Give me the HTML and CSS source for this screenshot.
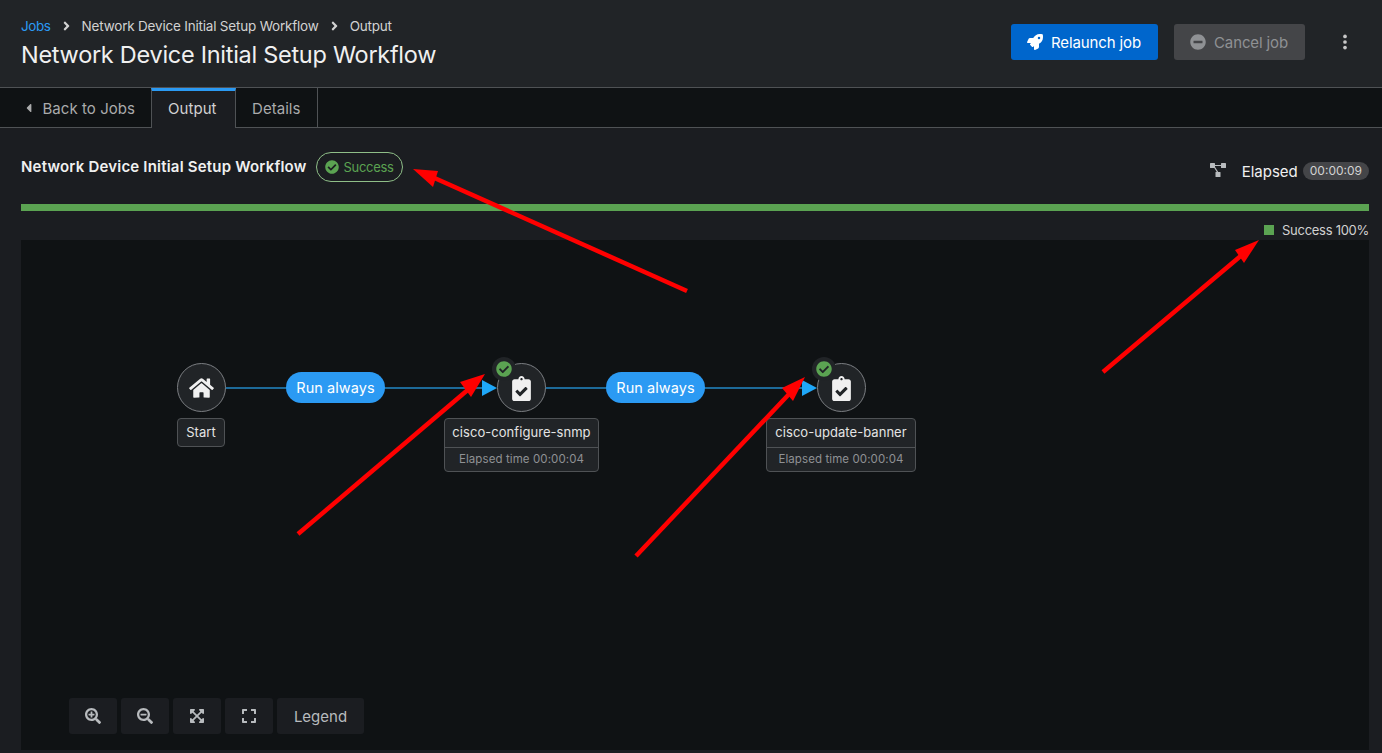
FILE: index.html
```html
<!DOCTYPE html>
<html lang="en">
<head>
<meta charset="utf-8">
<title>Network Device Initial Setup Workflow</title>
<link rel="stylesheet" href="styles.css">
</head>
<body>
<svg class="defs" width="0" height="0" aria-hidden="true">
  <defs>
    <symbol id="i-check" viewBox="0 0 512 512"><path d="M504 256c0 136.967-111.033 248-248 248S8 392.967 8 256 119.033 8 256 8s248 111.033 248 248zM227.314 387.314l184-184c6.248-6.248 6.248-16.379 0-22.627l-22.627-22.627c-6.248-6.249-16.379-6.249-22.628 0L216 308.118l-70.059-70.059c-6.248-6.248-16.379-6.248-22.628 0l-22.627 22.627c-6.248 6.248-6.248 16.379 0 22.627l104 104c6.249 6.249 16.379 6.249 22.628.001z"/></symbol>
    <symbol id="i-clip" viewBox="0 0 384 512"><path d="M336 64h-80c0-35.3-28.7-64-64-64s-64 28.7-64 64H48C21.5 64 0 85.5 0 112v352c0 26.5 21.5 48 48 48h288c26.5 0 48-21.5 48-48V112c0-26.5-21.5-48-48-48zM192 40c13.3 0 24 10.7 24 24s-10.7 24-24 24-24-10.7-24-24 10.7-24 24-24zm121.2 231.8l-143 141.8c-4.7 4.7-12.3 4.6-17-.1l-82.6-83.3c-4.7-4.7-4.6-12.3.1-17L99.1 285c4.7-4.7 12.3-4.6 17 .1l46 46.4 106-105.2c4.7-4.7 12.3-4.6 17 .1l28.2 28.4c4.7 4.8 4.6 12.3-.1 17z"/></symbol>
    <symbol id="i-angle" viewBox="0 0 256 512"><path d="M224.3 273l-136 136c-9.4 9.4-24.6 9.4-33.9 0l-22.6-22.6c-9.4-9.4-9.4-24.6 0-33.9l96.4-96.4-96.4-96.4c-9.4-9.4-9.4-24.6 0-33.9L54.3 103c9.4-9.4 24.6-9.4 33.9 0l136 136c9.5 9.4 9.5 24.6.1 34z"/></symbol>
  </defs>
</svg>

<header class="top">
  <div class="top-left">
    <nav class="crumbs">
      <a class="crumb-link">Jobs</a>
      <svg class="crumb-sep"><use href="#i-angle"/></svg>
      <span>Network Device Initial Setup Workflow</span>
      <svg class="crumb-sep"><use href="#i-angle"/></svg>
      <span>Output</span>
    </nav>
    <h1 class="page-title">Network Device Initial Setup Workflow</h1>
  </div>
  <div class="top-actions">
    <button class="btn btn-primary">
      <svg class="btn-icon" viewBox="0 0 512 512"><path d="M505.12 19.09c-1.19-5.53-6.66-11-12.21-12.18C460.72 0 435.51 0 410.41 0 307.18 0 245.27 55.2 199.05 128H94.84c-16.35.02-35.56 11.88-42.89 26.48L2.52 253.3A28.4 28.4 0 0 0 0 264a24 24 0 0 0 24 24h103.81l-22.47 22.47c-11.37 11.36-13 32.26 0 45.25l50.9 50.9c11.16 11.19 32.16 13.16 45.28 0L224 384.16V488a24 24 0 0 0 24 24 28.56 28.56 0 0 0 10.71-2.52l98.73-49.39c14.63-7.3 26.51-26.5 26.51-42.86V312.8c72.6-46.31 128.03-108.41 128.03-211.1.1-25.2.1-50.4-6.86-82.61zM384.04 168a40 40 0 1 1 40.01-40 40.02 40.02 0 0 1-40.01 40z"/></svg>
      Relaunch job
    </button>
    <button class="btn btn-disabled">
      <svg class="btn-icon" viewBox="0 0 512 512"><path d="M256 8C119 8 8 119 8 256s111 248 248 248 248-111 248-248S393 8 256 8zM124 296c-6.6 0-12-5.4-12-12v-56c0-6.6 5.4-12 12-12h264c6.6 0 12 5.4 12 12v56c0 6.6-5.4 12-12 12H124z"/></svg>
      Cancel job
    </button>
    <button class="kebab" aria-label="Actions">
      <svg viewBox="0 0 6 20"><circle cx="3" cy="3" r="2.3"/><circle cx="3" cy="10" r="2.3"/><circle cx="3" cy="17" r="2.3"/></svg>
    </button>
  </div>
</header>

<nav class="tabs">
  <a class="tab tab-back">
    <svg class="caret" viewBox="0 0 192 512"><path d="M192 127.338v257.324c0 17.818-21.543 26.741-34.142 14.142L29.196 270.142c-7.81-7.81-7.81-20.474 0-28.284l128.662-128.662c12.599-12.6 34.142-3.676 34.142 14.142z"/></svg>
    Back to Jobs
  </a>
  <a class="tab tab-active">Output</a>
  <a class="tab">Details</a>
</nav>

<main class="content">
  <div class="job-head">
    <div class="job-title">
      <h2>Network Device Initial Setup Workflow</h2>
      <span class="status-pill"><svg class="status-icon"><use href="#i-check"/></svg>Success</span>
    </div>
    <div class="job-meta">
      <svg class="graph-icon" viewBox="0 0 16 14"><rect x="0" y="0" width="5" height="5" rx=".6"/><rect x="11" y="0" width="5" height="5" rx=".6"/><rect x="5.5" y="9" width="5" height="5" rx=".6"/><path d="M4 2h8v1H4zM3.4 3.5l1-.6 4 6.4-1 .6z"/></svg>
      <span class="elapsed">Elapsed</span>
      <span class="elapsed-badge">00:00:09</span>
    </div>
  </div>
  <div class="progress"></div>
  <div class="legend-row"><i class="legend-swatch"></i>Success 100%</div>

  <section class="canvas">
    <div class="edge edge-a"></div>
    <div class="edge edge-b"></div>
    <div class="edge-arrow arrow-a"></div>
    <div class="edge-arrow arrow-b"></div>
    <span class="edge-pill pill-a">Run always</span>
    <span class="edge-pill pill-b">Run always</span>

    <div class="node node-start">
      <svg class="home" viewBox="0 0 576 512"><path d="M280.37 148.26L96 300.11V464a16 16 0 0 0 16 16l112.06-.29a16 16 0 0 0 15.92-16V368a16 16 0 0 1 16-16h64a16 16 0 0 1 16 16v95.64a16 16 0 0 0 16 16.05L464 480a16 16 0 0 0 16-16V300L295.67 148.26a12.19 12.19 0 0 0-15.3 0zM571.6 251.47L488 182.56V44.05a12 12 0 0 0-12-12h-56a12 12 0 0 0-12 12v72.61L318.47 43a48 48 0 0 0-61 0L4.34 251.47a12 12 0 0 0-1.6 16.9l25.5 31A12 12 0 0 0 45.15 301l235.22-193.74a12.19 12.19 0 0 1 15.3 0L530.9 301a12 12 0 0 0 16.9-1.6l25.5-31a12 12 0 0 0-1.7-16.93z"/></svg>
    </div>
    <div class="node-label label-start"><div class="label-name">Start</div></div>

    <div class="node node-one"><svg class="clip"><use href="#i-clip"/></svg></div>
    <div class="node-badge badge-one"><svg><use href="#i-check"/></svg></div>
    <div class="node-label label-one">
      <div class="label-name">cisco-configure-snmp</div>
      <div class="label-time">Elapsed time 00:00:04</div>
    </div>

    <div class="node node-two"><svg class="clip"><use href="#i-clip"/></svg></div>
    <div class="node-badge badge-two"><svg><use href="#i-check"/></svg></div>
    <div class="node-label label-two">
      <div class="label-name">cisco-update-banner</div>
      <div class="label-time">Elapsed time 00:00:04</div>
    </div>

    <div class="toolbar">
      <button class="tool"><svg viewBox="0 0 512 512"><path d="M304 192v32c0 6.6-5.4 12-12 12h-56v56c0 6.6-5.4 12-12 12h-32c-6.6 0-12-5.4-12-12v-56h-56c-6.6 0-12-5.4-12-12v-32c0-6.6 5.4-12 12-12h56v-56c0-6.6 5.4-12 12-12h32c6.6 0 12 5.4 12 12v56h56c6.6 0 12 5.4 12 12zm201 284.7L476.7 505c-9.4 9.4-24.6 9.4-33.9 0L343 405.3c-4.5-4.5-7-10.6-7-17V372c-35.3 27.6-79.7 44-128 44C93.1 416 0 322.9 0 208S93.1 0 208 0s208 93.1 208 208c0 48.3-16.4 92.7-44 128h16.3c6.4 0 12.5 2.5 17 7l99.7 99.7c9.3 9.4 9.3 24.6 0 34zM344 208c0-75.2-60.8-136-136-136S72 132.8 72 208s60.8 136 136 136 136-60.8 136-136z"/></svg></button>
      <button class="tool"><svg viewBox="0 0 512 512"><path d="M304 192v32c0 6.6-5.4 12-12 12H124c-6.6 0-12-5.4-12-12v-32c0-6.6 5.4-12 12-12h168c6.6 0 12 5.4 12 12zm201 284.7L476.7 505c-9.4 9.4-24.6 9.4-33.9 0L343 405.3c-4.5-4.5-7-10.6-7-17V372c-35.3 27.6-79.7 44-128 44C93.1 416 0 322.9 0 208S93.1 0 208 0s208 93.1 208 208c0 48.3-16.4 92.7-44 128h16.3c6.4 0 12.5 2.5 17 7l99.7 99.7c9.3 9.4 9.3 24.6 0 34zM344 208c0-75.2-60.8-136-136-136S72 132.8 72 208s60.8 136 136 136 136-60.8 136-136z"/></svg></button>
      <button class="tool"><svg viewBox="0 0 448 512"><path d="M448 344v112a23.94 23.94 0 0 1-24 24H312c-21.39 0-32.09-25.9-17-41l36.2-36.2L224 295.6 116.77 402.9 153 439c15.09 15.1 4.39 41-17 41H24a23.94 23.94 0 0 1-24-24V344c0-21.4 25.89-32.1 41-17l36.19 36.2L184.46 256 77.18 148.7 41 185c-15.1 15.1-41 4.4-41-17V56a23.94 23.94 0 0 1 24-24h112c21.39 0 32.09 25.9 17 41l-36.2 36.2L224 216.4l107.23-107.3L295 73c-15.09-15.1-4.39-41 17-41h112a23.94 23.94 0 0 1 24 24v112c0 21.4-25.89 32.1-41 17l-36.19-36.2L263.54 256l107.28 107.3L407 327.1c15.1-15.2 41-4.5 41 16.9z"/></svg></button>
      <button class="tool"><svg viewBox="0 0 448 512"><path d="M0 180V56c0-13.3 10.7-24 24-24h124c6.6 0 12 5.4 12 12v40c0 6.6-5.4 12-12 12H64v84c0 6.6-5.4 12-12 12H12c-6.6 0-12-5.4-12-12zM288 44v40c0 6.6 5.4 12 12 12h84v84c0 6.6 5.4 12 12 12h40c6.6 0 12-5.4 12-12V56c0-13.3-10.7-24-24-24H300c-6.6 0-12 5.4-12 12zm148 276h-40c-6.6 0-12 5.4-12 12v84h-84c-6.6 0-12 5.4-12 12v40c0 6.6 5.4 12 12 12h124c13.3 0 24-10.7 24-24V332c0-6.6-5.4-12-12-12zM160 468v-40c0-6.6-5.4-12-12-12H64v-84c0-6.6-5.4-12-12-12H12c-6.6 0-12 5.4-12 12v124c0 13.3 10.7 24 24 24h124c6.6 0 12-5.4 12-12z"/></svg></button>
      <button class="tool tool-text">Legend</button>
    </div>
  </section>
</main>

<svg class="annotations" viewBox="0 0 1382 753" aria-hidden="true">
  <g class="anno">
    <line x1="687" y1="291" x2="430" y2="176"/><polygon points="413,169 438,171 433,187"/>
    <line x1="1103" y1="372" x2="1243" y2="254"/><polygon points="1259,240 1235,250 1244,263"/>
    <line x1="298" y1="534" x2="470" y2="388"/><polygon points="485,374 460,382 471,397"/>
    <line x1="636" y1="556" x2="791" y2="392"/><polygon points="805,377 782,388 793,401"/>
  </g>
</svg>
</body>
</html>
```
FILE: styles.css
```css
* { box-sizing: border-box; }
html, body { margin: 0; height: 100%; }
body {
  position: relative;
  display: flex;
  flex-direction: column;
  overflow: hidden;
  background: #1b1d21;
  color: #f0f0f0;
  font-family: Inter, "Liberation Sans", sans-serif;
  font-size: 15px;
}
.defs { position: absolute; }
svg { fill: currentColor; display: block; }

/* header */
.top {
  height: 88px;
  flex: none;
  display: flex;
  justify-content: space-between;
  padding: 16px 20px 0 21px;
  background: #212427;
  border-bottom: 1px solid #4f5255;
}
.crumbs {
  display: flex;
  align-items: center;
  height: 19px;
  font-size: 13.5px;
  letter-spacing: -.2px;
  color: #d2d2d2;
}
.crumb-link { color: #2b9af3; letter-spacing: -.4px; }
.crumb-sep { width: 7px; height: 14px; margin: 0 12px 0 12px; color: #d2d2d2; }
.page-title {
  margin: 3px 0 0;
  font-size: 23.5px;
  line-height: 34px;
  font-weight: 400;
  letter-spacing: -.28px;
  color: #f0f0f0;
}
.top-actions { display: flex; align-items: flex-start; padding-top: 8px; }
.btn {
  height: 36px;
  display: flex;
  align-items: center;
  gap: 8px;
  border: 0;
  border-radius: 3px;
  padding: 0 16px;
  font: inherit;
  white-space: nowrap;
  letter-spacing: -.12px;
}
.btn-icon { width: 16px; height: 16px; }
.btn-primary { width: 147px; background: #0066cc; color: #fff; margin-right: 16px; }
.btn-disabled { width: 131px; background: #444548; color: #8f9194; }
.kebab { width: 34px; margin-left: 23px; height: 36px; border: 0; background: none; padding: 0; color: #c7c7c7; display: flex; align-items: center; justify-content: center; }
.kebab svg { width: 6px; height: 16px; }

/* tabs */
.tabs {
  height: 40px;
  flex: none;
  display: flex;
  background: #0f1214;
  border-bottom: 1px solid #4f5255;
}
.tab {
  display: flex;
  align-items: center;
  gap: 11px;
  padding: 0 16px;
  height: 40px;
  color: #aaabac;
  letter-spacing: .05px;
  border-right: 1px solid #4f5255;
}
.tab-back { width: 151px; padding-left: 26px; border-right: 0; white-space: nowrap; }
.caret { width: 6px; height: 14px; }
.tab-active {
  width: 85px;
  background: #1b1d21;
  color: #d2d2d2;
  border-left: 1px solid #4f5255;
  border-top: 3px solid #2b9af3;
  padding-bottom: 2px;
}
.tab:last-child { width: 82px; }

/* content */
.content { flex: 1; padding: 24px 13px 0 21px; min-height: 0; }
.job-head { display: flex; justify-content: space-between; height: 52px; }
.job-title { display: flex; align-items: flex-start; gap: 10px; }
.job-title h2 { margin: 4px 0 0; font-size: 15px; line-height: 22px; font-weight: 600; letter-spacing: .2px; color: #f0f0f0; }
.status-pill {
  height: 30px;
  display: flex;
  align-items: center;
  gap: 4px;
  padding: 0 8px;
  border: 1px solid #8fbf88;
  border-radius: 15px;
  font-size: 13px;
  letter-spacing: -.3px;
  color: #5ba352;
}
.status-icon { width: 14px; height: 14px; }
.job-meta { display: flex; align-items: center; height: 38px; color: #f0f0f0; }
.graph-icon { width: 16px; height: 14px; color: #b8bbbe; margin: 0 16px 3px 0; }
.elapsed { letter-spacing: 0; font-size: 15px; margin-right: 5px; }
.elapsed-badge {
  height: 18px;
  line-height: 18px;
  padding: 0 7px;
  border-radius: 9px;
  background: #444548;
  font-size: 12px;
  color: #d2d2d2;
}
.progress { height: 7px; background: #5ba352; }
.legend-row {
  height: 29px;
  display: flex;
  align-items: center;
  justify-content: flex-end;
  gap: 8px;
  padding-top: 9px;
  font-size: 13px;
  letter-spacing: -.28px;
  color: #d2d2d2;
}
.legend-swatch { width: 10px; height: 10px; background: #5ba352; }

/* canvas */
.canvas { position: relative; height: 510px; background: #0f1214; }
.edge { position: absolute; top: 147px; height: 2px; background: #1d6a99; }
.edge-a { left: 204px; width: 262px; }
.edge-b { left: 524px; width: 262px; }
.edge-arrow {
  position: absolute;
  top: 140px;
  width: 0;
  height: 0;
  border-left: 15px solid #1fa7f8;
  border-top: 8px solid transparent;
  border-bottom: 8px solid transparent;
}
.arrow-a { left: 461px; }
.arrow-b { left: 781px; }
.edge-pill {
  position: absolute;
  top: 132px;
  width: 99px;
  height: 31px;
  border-radius: 16px;
  background: #2b9af3;
  color: #fff;
  font-size: 14.5px;
  line-height: 31px;
  text-align: center;
  letter-spacing: .05px;
}
.pill-a { left: 265px; }
.pill-b { left: 585px; }
.node {
  position: absolute;
  top: 123px;
  width: 49px;
  height: 49px;
  display: flex;
  align-items: center;
  justify-content: center;
  border: 1px solid #7b7e82;
  border-radius: 50%;
  background: #212427;
  color: #f0f0f0;
}
.node-start { left: 156px; }
.node-one { left: 476px; }
.node-two { left: 796px; }
.home { width: 25px; height: 22px; }
.clip { width: 19px; height: 25px; margin-top: 1px; }
.node-badge {
  position: absolute;
  top: 117px;
  width: 24px;
  height: 24px;
  padding: 4px;
  border-radius: 50%;
  background: #212427;
  color: #5ba352;
}
.node-badge svg { width: 16px; height: 16px; }
.badge-one { left: 471px; }
.badge-two { left: 791px; }
.node-label {
  position: absolute;
  top: 178px;
  border: 1px solid #4f5255;
  border-radius: 4px;
  background: #212427;
  text-align: center;
}
.label-name { height: 28px; line-height: 27px; font-size: 13px; letter-spacing: .05px; color: #e4e4e4; }
.label-time { height: 24px; line-height: 23px; border-top: 1px solid #4f5255; font-size: 11.5px; letter-spacing: .1px; color: #8f9194; }
.label-start { left: 156px; width: 48px; height: 29px; }
.label-one { left: 423px; width: 155px; }
.label-two { left: 745px; width: 150px; }
.toolbar { position: absolute; left: 48px; top: 458px; display: flex; gap: 4px; }
.tool {
  width: 48px;
  height: 36px;
  display: flex;
  align-items: center;
  justify-content: center;
  border: 0;
  border-radius: 3px;
  padding: 0;
  background: #1b1d21;
  color: #b8bbbe;
  font: inherit;
}
.tool svg { width: 16px; height: 16px; }
.tool-text { width: 87px; }

/* hand-drawn annotations over the screenshot */
.annotations { position: absolute; inset: 0; width: 100%; height: 100%; pointer-events: none; }
.anno line { stroke: #ff0000; stroke-width: 4.5; }
.anno polygon { fill: #ff0000; }
```
